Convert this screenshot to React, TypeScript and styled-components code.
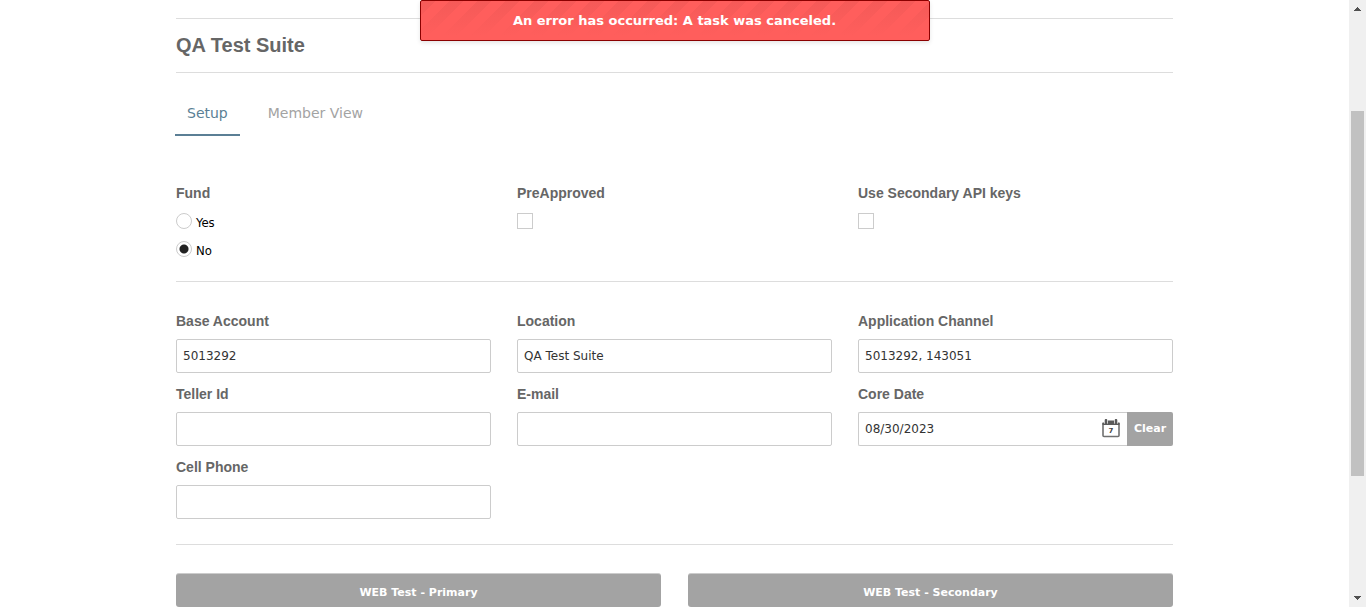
import React from "react";
import styled, { createGlobalStyle, css } from "styled-components";

const wide = '"DejaVu Sans", Verdana, sans-serif';
const heading = '"Liberation Sans", Arial, sans-serif';

const GlobalStyle = createGlobalStyle`
  *, *::before, *::after { box-sizing: border-box; }
  body { margin: 0; background: #fff; color: #333; font: 12px/16px ${wide}; }
`;

const Shell = styled.div`
  display: flex;
  height: 100vh;
  overflow: hidden;
`;

const Page = styled.main`
  position: relative;
  flex: 1;
  min-width: 0;
  padding: 18px 16px 0;
`;

const Content = styled.div`
  max-width: 997px;
  margin: 0 auto;
`;

const Alert = styled.div`
  position: absolute;
  top: 0;
  left: 50%;
  z-index: 1;
  width: 510px;
  max-width: 100%;
  transform: translateX(-50%);
  padding: 12px 10px;
  border: 1px solid darkred;
  border-radius: 2px;
  background:
    linear-gradient(to bottom, rgba(255, 94, 92, 0) 0%, #ff5e5c 88%),
    repeating-linear-gradient(135deg, #f55a58 0 10px, #ff5e5c 10px 20px);
  box-shadow: 0 2px 4px rgba(0, 0, 0, 0.1);
  color: #fff;
  font-size: 13px;
  font-weight: bold;
  line-height: 15px;
  text-align: center;
`;

const Header = styled.header`
  padding: 12px 0 13px;
  border-top: 1px solid #ddd;
  border-bottom: 1px solid #ddd;
`;

const Title = styled.h1`
  margin: 0;
  color: #666;
  font: bold 20px/28px ${heading};
`;

const Tabs = styled.nav`
  display: flex;
  gap: 16px;
  margin: 19px 0 0 -1px;
`;

const Tab = styled.a<{ $active?: boolean }>`
  padding: 11px 12px;
  border-bottom: 2px solid ${(p) => (p.$active ? "#5b7f95" : "transparent")};
  color: ${(p) => (p.$active ? "#5b7f95" : "#a3a3a3")};
  font-size: 14px;
  line-height: 20px;
  text-decoration: none;
`;

const Columns = styled.section<{ $top: number; $bottom: number }>`
  display: grid;
  grid-template-columns: repeat(3, minmax(0, 1fr));
  gap: 11px 26px;
  padding: ${(p) => p.$top}px 0 ${(p) => p.$bottom}px;
  border-bottom: 1px solid #ddd;
`;

const labelText = css`
  display: block;
  padding: 0;
  margin-bottom: 8px;
  color: #666;
  font: bold 14px/20px ${heading};
`;

const Label = styled.label`
  ${labelText}
`;

const ChoiceLabel = styled.label`
  ${labelText}
  margin-bottom: 10px;
`;

const Group = styled.fieldset`
  min-width: 0;
  margin: 0;
  padding: 0;
  border: 0;
`;

const Legend = styled.legend`
  ${labelText}
  margin-bottom: 10px;
`;

const box = css`
  appearance: none;
  flex: none;
  display: block;
  width: 16px;
  height: 16px;
  margin: 0;
  border: 1px solid #ccc;
  background: #fff;
`;

const Radio = styled.input.attrs({ type: "radio" })`
  ${box}
  border-radius: 50%;
  &:checked {
    background: radial-gradient(circle, #222 0 4px, #fff 5px);
  }
`;

const Checkbox = styled.input.attrs({ type: "checkbox" })`
  ${box}
  &:checked {
    background: #222;
    box-shadow: inset 0 0 0 3px #fff;
  }
`;

const Choice = styled.label`
  display: flex;
  gap: 4px;
  width: max-content;
  height: 16px;
  margin-bottom: 12px;
  color: #000;
  font: 13px/20px "DejaVu Sans Condensed", Tahoma, sans-serif;
`;

const TextInput = styled.input`
  display: block;
  width: 100%;
  min-width: 0;
  height: 34px;
  padding: 0 6px;
  border: 1px solid #ccc;
  border-radius: 2px;
  background: #fff;
  color: #333;
  font: 12px/16px ${wide};
`;

const DateRow = styled.div`
  display: flex;
`;

const DateBox = styled.div`
  display: flex;
  align-items: center;
  flex: 1;
  min-width: 0;
  border: 1px solid #ccc;
  border-right: 0;
  border-radius: 2px 0 0 2px;
`;

const DateInput = styled(TextInput)`
  flex: 1;
  height: 32px;
  border: 0;
`;

const IconButton = styled.button`
  display: flex;
  margin-right: 7px;
  padding: 0;
  border: 0;
  background: none;
`;

const ClearButton = styled.button`
  width: 46px;
  height: 34px;
  padding: 0;
  border: 0;
  border-radius: 0 2px 2px 0;
  background: #a3a3a3;
  color: #fff;
  font: bold 11px/16px ${wide};
`;

const Actions = styled.div`
  display: flex;
  gap: 27px;
  padding-top: 28px;
`;

const ActionButton = styled.button`
  flex: 1;
  height: 34px;
  padding: 4px 0 0;
  border: 0;
  border-top: 1px solid #ccc;
  border-radius: 3px;
  background: #a3a3a3;
  color: #fff;
  font: bold 11px/16px ${wide};
`;

const ScrollBar = styled.aside`
  display: flex;
  flex-direction: column;
  align-items: center;
  width: 17px;
  background: #f0f0f0;
`;

const ScrollArrow = styled.svg`
  display: block;
  flex: none;
  width: 17px;
  height: 17px;
`;

const ScrollGap = styled.div<{ $share: number }>`
  flex: ${(p) => p.$share} 0 0;
`;

const ScrollThumb = styled(ScrollGap)`
  width: 13px;
  background: #c1c1c1;
`;

function CalendarIcon() {
  return (
    <svg width="18" height="20" viewBox="0 0 18 20" aria-hidden="true">
      <path d="M1 4V16.500Q1 17.500 2 17.500H16Q17 17.500 17 16.500V4" fill="#fff" stroke="#707070" strokeWidth="1.600" />
      <path d="M6 1.500H12V6H6ZM0.500 3.500H17.500V6H0.500Z" fill="#5a5a5a" />
      <path d="M4 0V4.500M14 0V4.500" stroke="#fff" strokeWidth="4" />
      <path d="M4 1.200V4M14 1.200V4" stroke="#5a5a5a" strokeWidth="2.600" strokeLinecap="round" />
      <text x="9" y="14" textAnchor="middle" fontFamily="DejaVu Sans" fontSize="7" fontWeight="bold" fill="#444">7</text>
    </svg>
  );
}

type FieldProps = { id: string; label: string; value?: string };

function Field({ id, label, value }: FieldProps) {
  return (
    <div>
      <Label htmlFor={id}>{label}</Label>
      <TextInput id={id} defaultValue={value} />
    </div>
  );
}

function CheckField({ id, label }: FieldProps) {
  return (
    <div>
      <ChoiceLabel htmlFor={id}>{label}</ChoiceLabel>
      <Checkbox id={id} />
    </div>
  );
}

export default function App() {
  return (
    <>
      <GlobalStyle />
      <Shell>
        <Page>
          <Alert role="alert">An error has occurred: A task was canceled.</Alert>
          <Content>
            <Header>
              <Title>QA Test Suite</Title>
            </Header>
            <Tabs>
              <Tab href="#setup" $active aria-current="page">Setup</Tab>
              <Tab href="#member">Member View</Tab>
            </Tabs>
            <Columns $top={47} $bottom={12}>
              <Group>
                <Legend>Fund</Legend>
                <Choice><Radio name="fund" value="yes" />Yes</Choice>
                <Choice><Radio name="fund" value="no" defaultChecked />No</Choice>
              </Group>
              <CheckField id="preapproved" label="PreApproved" />
              <CheckField id="secondary" label="Use Secondary API keys" />
            </Columns>
            <Columns $top={29} $bottom={25}>
              <Field id="base" label="Base Account" value="5013292" />
              <Field id="location" label="Location" value="QA Test Suite" />
              <Field id="channel" label="Application Channel" value="5013292, 143051" />
              <Field id="teller" label="Teller Id" />
              <Field id="email" label="E-mail" />
              <div>
                <Label htmlFor="date">Core Date</Label>
                <DateRow>
                  <DateBox>
                    <DateInput id="date" defaultValue="08/30/2023" />
                    <IconButton type="button" aria-label="Open calendar"><CalendarIcon /></IconButton>
                  </DateBox>
                  <ClearButton type="button">Clear</ClearButton>
                </DateRow>
              </div>
              <Field id="phone" label="Cell Phone" />
            </Columns>
            <Actions>
              <ActionButton type="button">WEB Test - Primary</ActionButton>
              <ActionButton type="button">WEB Test - Secondary</ActionButton>
            </Actions>
          </Content>
        </Page>
        <ScrollBar aria-hidden="true">
          <ScrollArrow viewBox="0 0 17 17" shapeRendering="crispEdges"><path d="M5 11L8.500 7L12 11Z" fill="#505050" /></ScrollArrow>
          <ScrollGap $share={94} />
          <ScrollThumb $share={365} />
          <ScrollGap $share={114} />
          <ScrollArrow viewBox="0 0 17 17" shapeRendering="crispEdges"><path d="M5 6L8.500 10L12 6Z" fill="#505050" /></ScrollArrow>
        </ScrollBar>
      </Shell>
    </>
  );
}
